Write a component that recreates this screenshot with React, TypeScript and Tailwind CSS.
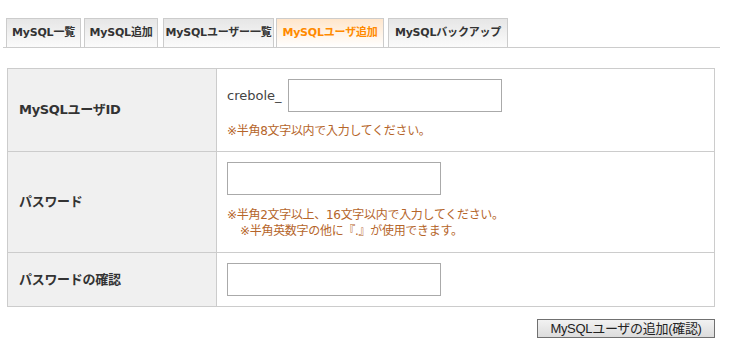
const FONT = { fontFamily: '"DejaVu Sans", "Noto Sans CJK JP", sans-serif' }

const TABS = [
  { label: 'MySQL一覧', w: 'w-[75px]', ml: 'ml-[3px]' },
  { label: 'MySQL追加', w: 'w-[74px]', ml: 'ml-[3px]' },
  { label: 'MySQLユーザー一覧', w: 'w-[111px]', ml: 'ml-[5px]' },
  { label: 'MySQLユーザ追加', w: 'w-[108px]', ml: 'ml-[2px]', active: true },
  { label: 'MySQLバックアップ', w: 'w-[120px]', ml: 'ml-[4px]' },
]

function Field({ className = '' }: { className?: string }) {
  return <input type="text" className={`block h-[33px] w-[214px] border border-[#aaa] bg-white outline-none ${className}`} />
}

export default function App() {
  return (
    <div className="w-[735px] h-[361px] bg-white text-[#333]" style={FONT}>
      {/* tabs */}
      <div className="pt-[18px] pl-[3px]">
        <div className="flex w-[717px] border-b border-[#ccc]">
          {TABS.map((t) => (
            <div
              key={t.label}
              className={`${t.w} ${t.ml} h-[29px] flex items-center justify-center border-t border-l border-r border-[#ccc] text-[11px] font-bold whitespace-nowrap tracking-[-0.2px] ${
                t.active
                  ? 'bg-gradient-to-b from-[#ffe6cc] to-white text-[#ff8a00]'
                  : 'bg-gradient-to-b from-[#e6e6e6] to-[#fbfbfb] text-[#333]'
              }`}
            >
              {t.label}
            </div>
          ))}
        </div>
      </div>

      {/* form table */}
      <div className="ml-[7px] mt-[20px] w-[708px] border border-[#ccc]">
        <div className="grid grid-cols-[209px_1fr] h-[83px] border-b border-[#ccc]">
          <div className="bg-[#f0f0f0] border-r border-[#ccc] flex items-center pl-[11px] text-[13px] font-bold tracking-[-0.3px]">
            MySQLユーザID
          </div>
          <div className="pl-[10px] pt-[10px]">
            <div className="flex items-center gap-[6px]">
              <span className="text-[13px] text-[#444]">crebole_</span>
              <Field />
            </div>
            <p className="mt-[10px] text-[12px] text-[#b5652a] tracking-[-0.3px]">※半角8文字以内で入力してください。</p>
          </div>
        </div>

        <div className="grid grid-cols-[209px_1fr] h-[101px] border-b border-[#ccc]">
          <div className="bg-[#f0f0f0] border-r border-[#ccc] flex items-center pl-[11px] text-[13px] font-bold tracking-[-0.3px]">
            パスワード
          </div>
          <div className="pl-[10px] pt-[10px]">
            <Field className="h-[32px]" />
            <p className="mt-[12px] text-[12px] leading-[16px] text-[#b5652a] tracking-[-0.3px]">
              ※半角2文字以上、16文字以内で入力してください。
            </p>
            <p className="pl-[13px] text-[12px] leading-[16px] text-[#b5652a] tracking-[-0.3px]">
              ※半角英数字の他に『.』が使用できます。
            </p>
          </div>
        </div>

        <div className="grid grid-cols-[209px_1fr] h-[53px]">
          <div className="bg-[#f0f0f0] border-r border-[#ccc] flex items-center pl-[11px] text-[13px] font-bold tracking-[-0.3px]">
            パスワードの確認
          </div>
          <div className="pl-[10px] flex items-center">
            <Field />
          </div>
        </div>
      </div>

      <div className="w-[715px] flex justify-end mt-[12px]">
        <button
          type="button"
          className="h-[19px] w-[178px] border border-[#707070] bg-gradient-to-b from-[#f2f2f2] to-[#dcdcdc] text-[13px] leading-none text-[#222] whitespace-nowrap tracking-[-0.3px]"
          style={{ fontFamily: '"Liberation Sans", "Noto Sans CJK JP", sans-serif' }}
        >
          MySQLユーザの追加(確認)
        </button>
      </div>
    </div>
  )
}
